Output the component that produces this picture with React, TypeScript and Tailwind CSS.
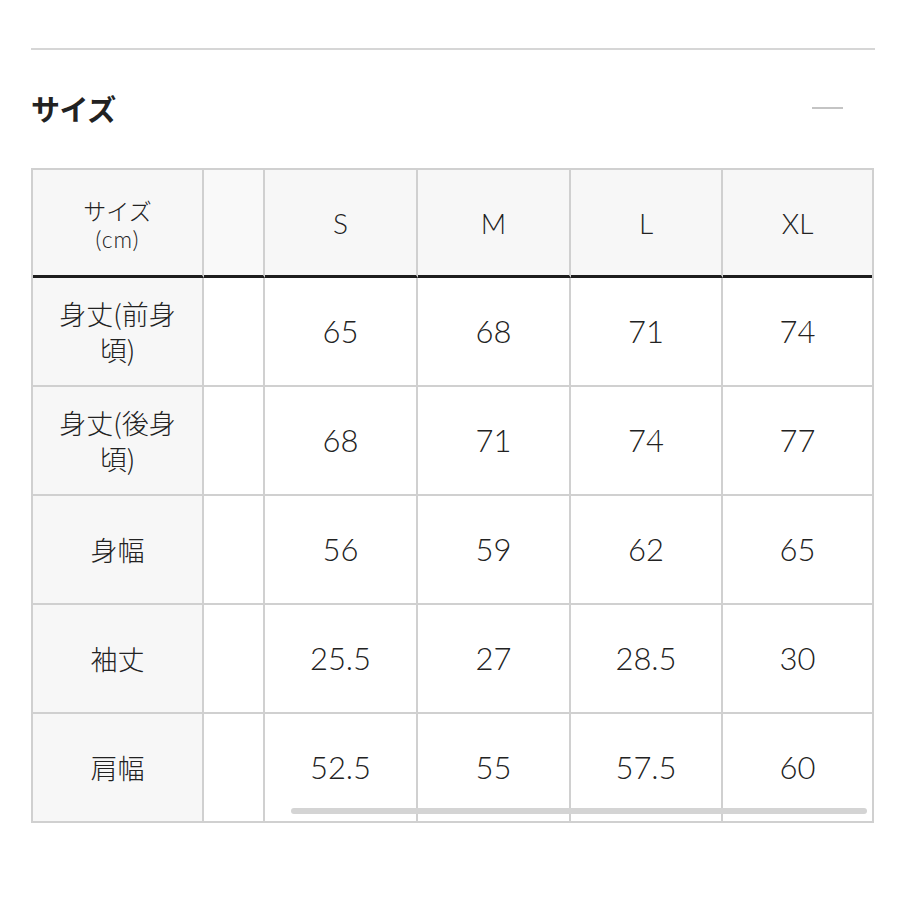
const sizes = ["S", "M", "L", "XL"]

const rows = [
  { label: ["身丈(前身", "頃)"], values: ["65", "68", "71", "74"] },
  { label: ["身丈(後身", "頃)"], values: ["68", "71", "74", "77"] },
  { label: ["身幅"], values: ["56", "59", "62", "65"] },
  { label: ["袖丈"], values: ["25.5", "27", "28.5", "30"] },
  { label: ["肩幅"], values: ["52.5", "55", "57.5", "60"] },
]

const jp = "font-['Noto_Sans_CJK_JP','Noto_Sans',sans-serif]"
const num = "font-['Lato','Noto_Sans',sans-serif] font-light"

export default function App() {
  return (
    <main className={`min-h-[900px] w-[900px] bg-white text-[#222] ${jp}`}>
      <div className="pl-[31px] pr-[25px] pt-[48px]">
        <div className="h-[2px] bg-[#d6d6d6]" />

        <div className="flex items-center justify-between h-[118px] pb-[2px]">
          <h2 className="text-[29px] font-bold leading-none tracking-[-0.5px]">サイズ</h2>
          <span className="block w-[31px] h-[2px] bg-[#c4c4c4] mr-[32px]" />
        </div>

        <div className="relative w-[843px] border-2 border-[#d0d0d0]">
          <div className="grid grid-cols-[171px_61px_153px_153px_152px_149px]">
            {/* header */}
            <div className="h-[108px] bg-[#f7f7f7] border-r-2 border-[#d0d0d0] border-b-[3px] border-b-[#1e1e1e] flex flex-col items-center justify-center pt-[2px] font-light">
              <span className="text-[23px] leading-[30px]">サイズ</span>
              <span className="text-[23px] leading-[28px] font-['Lato','Noto_Sans',sans-serif] font-light tracking-[1px]">(cm)</span>
            </div>
            <div className="h-[108px] bg-[#f9f9f9] border-r-2 border-[#d0d0d0] border-b-[3px] border-b-[#1e1e1e]" />
            {sizes.map((s, i) => (
              <div
                key={s}
                className={`h-[108px] bg-[#f7f7f7] border-b-[3px] border-b-[#1e1e1e] flex items-center justify-center text-[28px] ${num} ${i < sizes.length - 1 ? "border-r-2 border-[#d0d0d0]" : ""}`}
              >
                {s}
              </div>
            ))}

            {/* body */}
            {rows.map((row, r) => (
              <div key={r} className="contents">
                <div
                  className={`${r < rows.length - 1 ? "h-[109px] border-b-2" : "h-[107px]"} bg-[#f7f7f7] border-r-2 border-[#d0d0d0] flex flex-col items-center justify-center text-[27px] leading-[36px] font-light`}
                >
                  {row.label.map((t) => (
                    <span key={t}>{t}</span>
                  ))}
                </div>
                <div className={`${r < rows.length - 1 ? "h-[109px] border-b-2" : "h-[107px]"} bg-white border-r-2 border-[#d0d0d0]`} />
                {row.values.map((v, i) => (
                  <div
                    key={i}
                    className={`${r < rows.length - 1 ? "h-[109px] border-b-2" : "h-[107px]"} bg-white border-[#d0d0d0] flex items-center justify-center text-[31px] ${num} ${i < row.values.length - 1 ? "border-r-2" : ""}`}
                  >
                    {v}
                  </div>
                ))}
              </div>
            ))}
          </div>

          {/* horizontal scrollbar */}
          <div className="absolute left-[258px] right-[5px] bottom-[7px] h-[6px] rounded-full bg-[#d4d4d4]" />
        </div>
      </div>
    </main>
  )
}
